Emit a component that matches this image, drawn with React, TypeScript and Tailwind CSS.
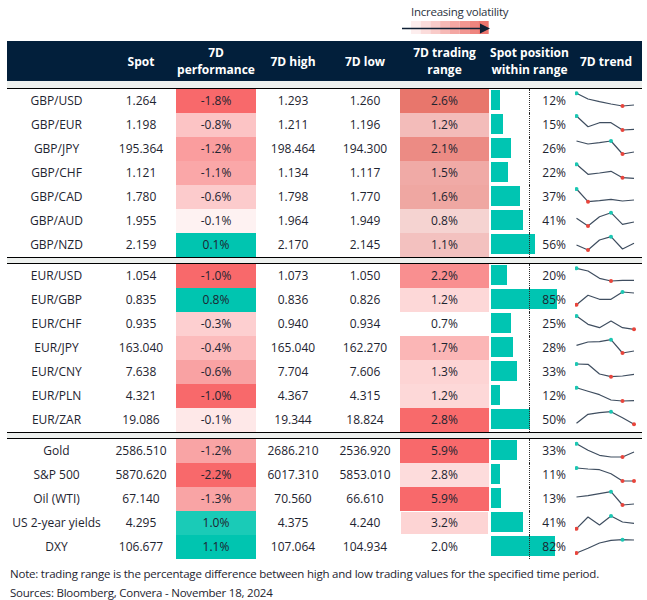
import React from "react";

type Row = {
  n: string;
  spot: string;
  perf: string;
  pc: string;
  hi: string;
  lo: string;
  rng: string;
  rc: string;
  pos: number;
  sp: number[];
  mx: number[];
  mn: number[];
  inset?: boolean;
};

const TEAL = "#00c5b0";
const RED = "#f8696b";

const groups: Row[][] = [
  [
    { n: "GBP/USD", spot: "1.264", perf: "-1.8%", pc: RED, hi: "1.293", lo: "1.260", rng: "2.6%", rc: "#e8766c", pos: 12, sp: [4.3, 10, 12.7, 15, 17, 16], mx: [0], mn: [4] },
    { n: "GBP/EUR", spot: "1.198", perf: "-0.8%", pc: "#fcc4c5", hi: "1.211", lo: "1.196", rng: "1.2%", rc: "#f3bcba", pos: 15, sp: [3, 13.7, 9.7, 9.7, 17, 16.3], mx: [0], mn: [4] },
    { n: "GBP/JPY", spot: "195.364", perf: "-1.2%", pc: "#fa9d9e", hi: "198.464", lo: "194.300", rng: "2.1%", rc: "#ec8b84", pos: 26, sp: [4, 7, 5.7, 4, 17, 15], mx: [3], mn: [4] },
    { n: "GBP/CHF", spot: "1.121", perf: "-1.1%", pc: "#faa7a8", hi: "1.134", lo: "1.117", rng: "1.5%", rc: "#f0aaa6", pos: 22, sp: [3.3, 13.3, 12, 10.3, 16.7, 17.3], mx: [0], mn: [4] },
    { n: "GBP/CAD", spot: "1.780", perf: "-0.6%", pc: "#fccbcc", hi: "1.798", lo: "1.770", rng: "1.6%", rc: "#efa7a2", pos: 37, sp: [4, 16.7, 15.7, 14.3, 16, 15], mx: [0], mn: [1] },
    { n: "GBP/AUD", spot: "1.955", perf: "-0.1%", pc: "#fef2f2", hi: "1.964", lo: "1.949", rng: "0.8%", rc: "#f5d3d1", pos: 41, sp: [9.3, 17, 7.7, 3.7, 15.3, 13], mx: [3], mn: [1] },
    { n: "GBP/NZD", spot: "2.159", perf: "0.1%", pc: TEAL, hi: "2.170", lo: "2.145", rng: "1.1%", rc: "#f3c1bf", pos: 56, sp: [12, 17, 7, 3.7, 16, 10.3], mx: [3], mn: [1] },
  ],
  [
    { n: "EUR/USD", spot: "1.054", perf: "-1.0%", pc: RED, hi: "1.073", lo: "1.050", rng: "2.2%", rc: "#f98f90", pos: 20, sp: [4.3, 7, 14.3, 17, 16.3, 16.3], mx: [0], mn: [3] },
    { n: "EUR/GBP", spot: "0.835", perf: "0.8%", pc: TEAL, hi: "0.836", lo: "0.826", rng: "1.2%", rc: "#fdd8d8", pos: 85, sp: [16.7, 7.3, 11.3, 11.3, 4, 5], mx: [4], mn: [0] },
    { n: "EUR/CHF", spot: "0.935", perf: "-0.3%", pc: "#fdcfd0", hi: "0.940", lo: "0.934", rng: "0.7%", rc: "#ffffff", pos: 25, sp: [4, 12.3, 15.7, 9, 15.7, 17.3], mx: [0], mn: [5] },
    { n: "EUR/JPY", spot: "163.040", perf: "-0.4%", pc: "#fcbbbc", hi: "165.040", lo: "162.270", rng: "1.7%", rc: "#fbb6b6", pos: 28, sp: [9.3, 6, 5.7, 3.7, 17, 15], mx: [3], mn: [4] },
    { n: "EUR/CNY", spot: "7.638", perf: "-0.6%", pc: "#f9a2a3", hi: "7.704", lo: "7.606", rng: "1.3%", rc: "#fdd4d4", pos: 33, sp: [4, 4.3, 14, 16.7, 16, 14.3], mx: [0], mn: [3] },
    { n: "EUR/PLN", spot: "4.321", perf: "-1.0%", pc: RED, hi: "4.367", lo: "4.315", rng: "1.2%", rc: "#fdd8d8", pos: 12, sp: [3.7, 7.3, 10.7, 16, 17, 16.7], mx: [0], mn: [4] },
    { n: "EUR/ZAR", spot: "19.086", perf: "-0.1%", pc: "#fee8e8", hi: "19.344", lo: "18.824", rng: "2.8%", rc: "#f86a6b", pos: 50, sp: [15.3, 6.3, 4.7, 3.7, 9.7, 16.3], mx: [3], mn: [5] },
  ],
  [
    { n: "Gold", spot: "2586.510", perf: "-1.2%", pc: "#f9a4a5", hi: "2686.210", lo: "2536.920", rng: "5.9%", rc: RED, pos: 33, sp: [4.7, 11.3, 16.3, 18, 18, 13], mx: [0], mn: [4] },
    { n: "S&P 500", spot: "5870.620", perf: "-2.2%", pc: RED, hi: "6017.310", lo: "5853.010", rng: "2.8%", rc: "#fddcdc", pos: 11, sp: [5, 6, 6.7, 10.7, 18, 18], mx: [0], mn: [4, 5] },
    { n: "Oil (WTI)", spot: "67.140", perf: "-1.3%", pc: "#f9a4a5", hi: "70.560", lo: "66.610", rng: "5.9%", rc: RED, pos: 13, sp: [10, 8.7, 6.7, 4.7, 18, 17], mx: [3], mn: [4] },
    { n: "US 2-year yields", spot: "4.295", perf: "1.0%", pc: "#1acbb7", hi: "4.375", lo: "4.240", rng: "3.2%", rc: "#fdd4d4", pos: 41, sp: [17.7, 6, 14, 5, 11, 12.3], mx: [3], mn: [0], inset: true },
    { n: "DXY", spot: "106.677", perf: "1.1%", pc: TEAL, hi: "107.064", lo: "104.934", rng: "2.0%", rc: "#ffffff", pos: 82, sp: [18, 13.3, 8, 5.3, 4.7, 5], mx: [4], mn: [0] },
  ],
];

function Spark({ r }: { r: Row }) {
  const xs = r.sp.map((_, i) => 1.5 + i * 11.5);
  const pts = r.sp.map((y, i) => `${xs[i]},${y}`).join(" ");
  return (
    <svg width="62" height="24" viewBox="0 0 62 24" className="block">
      <polyline points={pts} fill="none" stroke="#3f4e60" strokeWidth="1.2" strokeLinejoin="round" />
      {r.mx.map((i) => (
        <circle key={"a" + i} cx={xs[i]} cy={r.sp[i]} r="2" fill="#1cc7b3" />
      ))}
      {r.mn.map((i) => (
        <circle key={"b" + i} cx={xs[i]} cy={r.sp[i]} r="2" fill="#e8453c" />
      ))}
    </svg>
  );
}

function DataRow({ r }: { r: Row }) {
  return (
    <div className="flex h-[24px] items-stretch text-[12px] leading-[24px] text-[#1e2430]">
      <div className="w-[99px] text-center whitespace-nowrap">{r.n}</div>
      <div className="w-[70px] text-center">{r.spot}</div>
      <div className="w-[80px] text-center" style={{ backgroundColor: r.pc }}>
        {r.perf}
      </div>
      <div className="w-[74px] text-center">{r.hi}</div>
      <div className="w-[70px] text-center">{r.lo}</div>
      <div className="w-[89px] flex">
        <div
          className={r.inset ? "flex-1 m-px text-center leading-[22px]" : "flex-1 text-center"}
          style={{ backgroundColor: r.rc }}
        >
          {r.rng}
        </div>
      </div>
      <div className="relative w-[81px] grid">
        <div className="col-start-1 row-start-1 pl-[2px] pt-px">
          <div className="h-[20px] bg-[#00c5b2]" style={{ width: `${r.pos * 0.78}px` }} />
        </div>
        <div className="col-start-1 row-start-1 text-right pr-[4px]">{r.pos}%</div>
        <div className="absolute left-[40px] top-0 bottom-0 border-l border-dotted border-[#2a2a2a]" />
      </div>
      <div className="w-[72px] pl-[5px]">
        <Spark r={r} />
      </div>
    </div>
  );
}

function Sep() {
  return (
    <div>
      <div className="h-px bg-black" />
      <div className="h-[5px] bg-[#edf0ee]" />
      <div className="h-px bg-black" />
    </div>
  );
}

export default function App() {
  const steps = ["#fdeeee", "#fbdcdb", "#f9cbc9", "#f6b9b6", "#f4a7a3", "#f29691", "#ef857f", "#ec756e"];
  return (
    <div
      className="w-[647px] h-[600px] bg-white overflow-hidden"
      style={{ fontFamily: '"Open Sans", "Noto Sans", sans-serif' }}
    >
      <div className="h-[41px] pl-[401px] pt-[4px]">
        <div className="pl-[10px] text-[11.5px] tracking-[-0.25px] leading-[16px] text-[#2b3340]">
          Increasing volatility
        </div>
        <svg width="92" height="14" viewBox="0 0 92 14" className="block mt-[1px]">
          {steps.map((c, i) => (
            <rect key={i} x={10 + i * 9.7} y="0" width="9.8" height="13" fill={c} />
          ))}
          <line x1="1" y1="7.5" x2="82" y2="7.5" stroke="#0f2035" strokeWidth="1.3" />
          <polygon points="79,2.5 89,7.5 79,12.5" fill="#0f2035" />
        </svg>
      </div>
      <div className="ml-[7px] w-[635px]">
        <div className="flex h-[40px] bg-[#021f3b] text-white font-bold text-[12px] leading-[17px] items-center">
          <div className="w-[99px]" />
          <div className="w-[70px] text-center">Spot</div>
          <div className="w-[80px] text-center">
            7D
            <br />
            performance
          </div>
          <div className="w-[74px] text-center">7D high</div>
          <div className="w-[70px] text-center">7D low</div>
          <div className="w-[89px] text-center">
            7D trading
            <br />
            range
          </div>
          <div className="w-[81px] text-center whitespace-nowrap">
            Spot position
            <br />
            within range
          </div>
          <div className="w-[72px] text-center">7D trend</div>
        </div>
        <div className="h-[7px] bg-[#edf0ee]" />
        <div className="h-px bg-black" />
        {groups.map((g, gi) => (
          <div key={gi}>
            {gi > 0 && <Sep />}
            {g.map((r) => (
              <DataRow key={r.n} r={r} />
            ))}
          </div>
        ))}
      </div>
      <div className="pl-[10px] pt-[5px] text-[11.5px] tracking-[-0.22px] leading-[19px] text-[#1e2430] whitespace-nowrap">
        <div>
          Note: trading range is the percentage difference between high and low trading values for the specified time
          period.
        </div>
        <div>Sources: Bloomberg, Convera - November 18, 2024</div>
      </div>
    </div>
  );
}
